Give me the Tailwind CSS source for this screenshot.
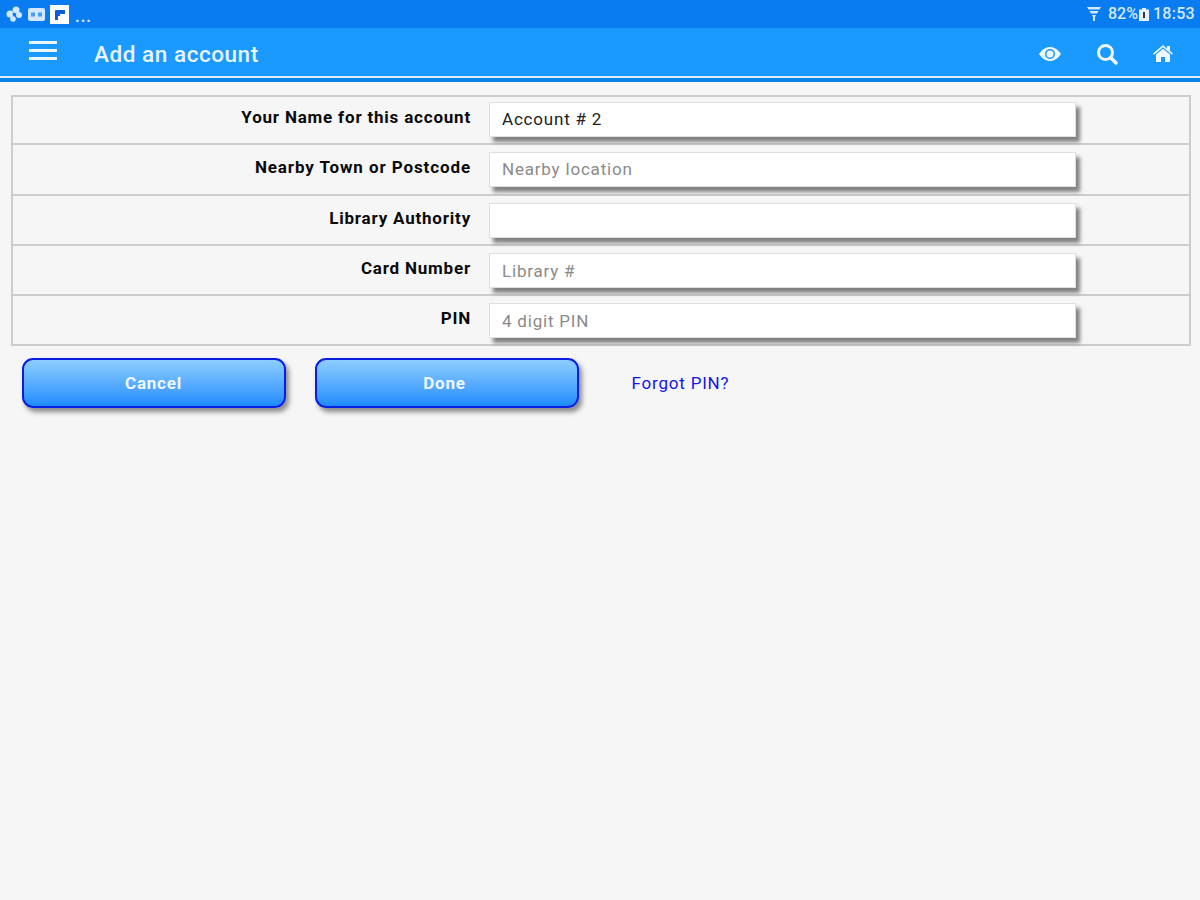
<!DOCTYPE html>
<html lang="en">

<head>
    <meta charset="UTF-8">
    <title>Add an account</title>
    <script src="https://cdn.jsdelivr.net/npm/@tailwindcss/browser@4"></script>
</head>

<body class="bg-[#f6f6f6] h-[900px] overflow-hidden font-['Roboto',sans-serif]">
    <!-- status bar -->
    <div class="h-[28px] bg-[#0a7cf2] flex items-center justify-between pl-[5px] pr-[5px] text-[#d3e8fd]">
        <div class="flex items-center gap-[5px]">
            <svg width="18" height="16" viewBox="0 0 18 16" fill="#d3e8fd">
                <circle cx="5" cy="8" r="3.500" />
                <circle cx="11" cy="4" r="3.500" />
                <circle cx="14" cy="9" r="3" />
                <circle cx="8" cy="13" r="2.800" />
                <circle cx="9" cy="8" r="1.500" fill="#0a7cf2" />
            </svg>
            <svg width="17" height="13" viewBox="0 0 17 13">
                <rect width="17" height="13" rx="2" fill="#d3e8fd" />
                <rect x="3" y="4.500" width="4" height="4" fill="#4a9cf0" />
                <rect x="10" y="4.500" width="4" height="4" fill="#4a9cf0" />
            </svg>
            <svg width="19" height="19" viewBox="0 0 19 19">
                <rect width="19" height="19" fill="#ffffff" />
                <path d="M5 15V6a1 1 0 0 1 1-1h9v4h-5v2H8v4z" fill="#0a5fd0" />
            </svg>
            <span class="text-[16px] font-bold leading-none mt-[5px] ml-[1px] tracking-[1px]">...</span>
        </div>
        <div class="flex items-center text-[16px] leading-none font-medium">
            <svg width="14" height="16" viewBox="0 0 14 16" fill="#d3e8fd" class="mr-[7px]">
                <path d="M0 1h14l-1.500 2.500h-11zM2.500 5h9l-1.500 2.500h-6zM5 9h4l-1 2v4H6v-4z" />
            </svg>
            <span>82%</span>
            <svg width="10" height="13" viewBox="0 0 10 13" class="ml-[1px] mr-[4px]">
                <path d="M3 0h4v1.500h3V13H0V1.500h3z" fill="#e8f2fe" />
                <rect x="4" y="4" width="2" height="6" fill="#333333" />
            </svg>
            <span class="tracking-[0.300px]">18:53</span>
        </div>
    </div>

    <!-- app bar -->
    <div class="h-[48px] bg-[#1a9afe] flex items-center">
        <div class="w-[28px] ml-[29px] flex flex-col gap-[5px] mb-[4px]">
            <div class="h-[3px] bg-[#eef7ff]"></div>
            <div class="h-[3px] bg-[#eef7ff]"></div>
            <div class="h-[3px] bg-[#eef7ff]"></div>
        </div>
        <h1 class="ml-[37px] text-[22.500px] font-medium text-[#eaf5ff] leading-none mt-[4px] tracking-[0.550px]">Add an account</h1>
        <div class="ml-auto flex items-center">
            <svg width="24" height="16" viewBox="0 0 24 16" class="mr-[34px] mt-[3px]">
                <path d="M1 8C4 3.500 8 1 12 1s8 2.500 11 7c-3 4.500-7 7-11 7S4 12.500 1 8z" fill="#eef7ff" />
                <circle cx="12" cy="8" r="5" fill="#1a9afe" />
                <circle cx="12" cy="8" r="3.500" fill="#eef7ff" />
            </svg>
            <svg width="22" height="22" viewBox="0 0 22 22" fill="none" stroke="#eef7ff" class="mr-[35px] mt-[4px]">
                <circle cx="9.500" cy="9.500" r="7" stroke-width="3" />
                <path d="M14.500 14.500L20 20" stroke-width="3.500" stroke-linecap="round" />
            </svg>
            <svg width="20" height="17" viewBox="0 0 20 17" fill="#eef7ff" class="mr-[27px] mt-[2px]">
                <path d="M10 0L0 8.500l1 1.200L10 2.300l9 7.400 1-1.200-3-2.500V1h-3v2.700z" />
                <path d="M10 3.800L3 9.500V17h5v-5h4v5h5V9.500z" />
            </svg>
        </div>
    </div>
    <div class="h-[2px] bg-[#dceefc]"></div>
    <div class="h-[4px] bg-[#0a84ea]"></div>

    <!-- form -->
    <div class="ml-[10.500px] mr-[9px] mt-[13px]">
        <div class="h-[50.300px] border-2 border-[#cccccc] flex">
            <label class="w-[458.500px] text-right font-bold text-[17px] tracking-[0.800px] leading-none pt-[12px] text-[#0a0a0a]">Your Name for this account</label>
            <div class="ml-[18px] mt-[5px] w-[587px] h-[35px] bg-white shadow-[4px_5px_4px_#808080] border border-[#e0e0e0] pl-[12px] text-[17px] tracking-[0.800px] leading-[33px] text-[#222222]">Account # 2</div>
        </div>
        <div class="h-[50.300px] border-2 border-t-0 border-[#cccccc] flex">
            <label class="w-[458.500px] text-right font-bold text-[17px] tracking-[0.900px] leading-none pt-[14px] text-[#0a0a0a]">Nearby Town or Postcode</label>
            <div class="ml-[18px] mt-[7px] w-[587px] h-[35px] bg-white shadow-[4px_5px_4px_#808080] border border-[#e0e0e0] pl-[12px] text-[17px] tracking-[0.800px] leading-[33px] text-[#8a8a8a]">Nearby location</div>
        </div>
        <div class="h-[50.300px] border-2 border-t-0 border-[#cccccc] flex">
            <label class="w-[458.500px] text-right font-bold text-[17px] tracking-[0.800px] leading-none pt-[14px] text-[#0a0a0a]">Library Authority</label>
            <div class="ml-[18px] mt-[7px] w-[587px] h-[35px] bg-white shadow-[4px_5px_4px_#808080] border border-[#e0e0e0]"></div>
        </div>
        <div class="h-[50.300px] border-2 border-t-0 border-[#cccccc] flex">
            <label class="w-[458.500px] text-right font-bold text-[17px] tracking-[0.800px] leading-none pt-[14px] text-[#0a0a0a]">Card Number</label>
            <div class="ml-[18px] mt-[7px] w-[587px] h-[35px] bg-white shadow-[4px_5px_4px_#808080] border border-[#e0e0e0] pl-[12px] text-[17px] tracking-[0.800px] leading-[34px] text-[#8a8a8a]">Library #</div>
        </div>
        <div class="h-[50.300px] border-2 border-t-0 border-[#cccccc] flex">
            <label class="w-[458.500px] text-right font-bold text-[17px] tracking-[0.800px] leading-none pt-[14px] text-[#0a0a0a]">PIN</label>
            <div class="ml-[18px] mt-[7px] w-[587px] h-[35px] bg-white shadow-[4px_5px_4px_#808080] border border-[#e0e0e0] pl-[12px] text-[17px] tracking-[0.800px] leading-[34px] text-[#8a8a8a]">4 digit PIN</div>
        </div>

        <!-- buttons -->
        <div class="flex items-center mt-[12px] ml-[11px]">
            <button class="w-[264px] h-[50px] rounded-[11px] border-2 border-[#0a1ee0] bg-linear-to-b from-[#8ccdfe] to-[#1a8bfe] shadow-[3px_4px_5px_#8a8a8a] text-[#f0f8ff] font-bold text-[17px] tracking-[0.800px]">Cancel</button>
            <button class="w-[264px] h-[50px] ml-[29px] pr-[4px] rounded-[11px] border-2 border-[#0a1ee0] bg-linear-to-b from-[#8ccdfe] to-[#1a8bfe] shadow-[3px_4px_5px_#8a8a8a] text-[#f0f8ff] font-bold text-[17px] tracking-[0.800px]">Done</button>
            <a class="ml-[53px] text-[#1414e6] text-[17px] tracking-[0.800px]">Forgot PIN?</a>
        </div>
    </div>
</body>

</html>
